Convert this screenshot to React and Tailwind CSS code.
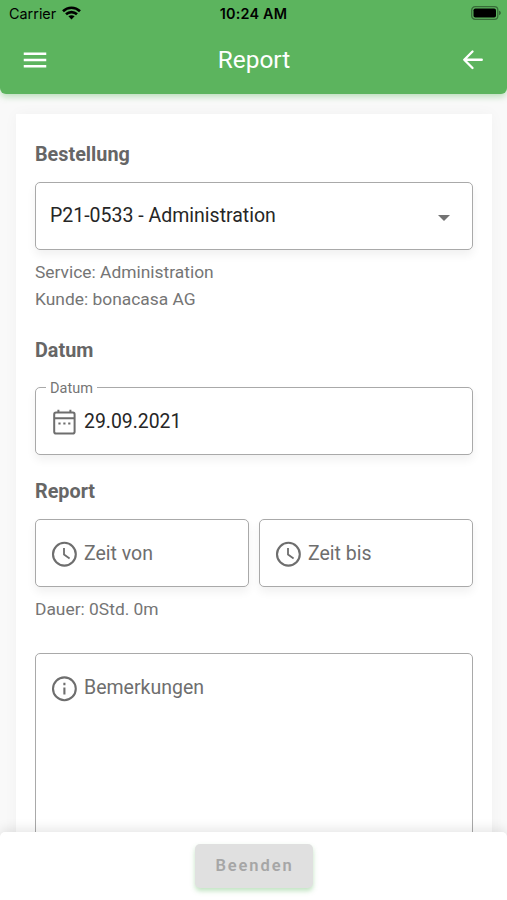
import React from 'react'

const MenuIcon = () => (
  <svg width="30" height="30" viewBox="0 0 24 24" fill="currentColor">
    <path d="M3 18h18v-2H3v2zm0-5h18v-2H3v2zm0-7v2h18V6H3z" />
  </svg>
)

const BackIcon = () => (
  <svg width="30" height="30" viewBox="0 0 24 24" fill="none" stroke="currentColor" strokeWidth="1.9" strokeLinecap="round" strokeLinejoin="round">
    <path d="M19 11.8H5.4M11.6 5.2L5 11.8l6.6 6.6" />
  </svg>
)

const WifiIcon = () => (
  <svg width="19" height="14" viewBox="0 0 19 14" fill="none" stroke="black" strokeWidth="2.6">
    <path d="M1 5.2C5.8 .6 13.2 .6 18 5.2" />
    <path d="M4 8.3C7.1 5.4 11.9 5.4 15 8.3" />
    <path d="M9.5 13.4L6.4 10.3C8.1 8.8 10.9 8.8 12.6 10.3Z" fill="black" stroke="none" />
  </svg>
)

const BatteryIcon = () => (
  <svg width="31" height="14" viewBox="0 0 31 14">
    <rect x="0.7" y="0.7" width="26.1" height="12.6" rx="3.4" fill="none" stroke="black" strokeOpacity="0.4" strokeWidth="1.3" />
    <rect x="2.5" y="2.5" width="22.5" height="9" rx="1.8" fill="black" />
    <path d="M28 4.8c1.2.3 1.9 1.2 1.9 2.2s-.7 1.9-1.9 2.2z" fill="black" fillOpacity="0.4" />
  </svg>
)

const CalendarIcon = () => (
  <svg width="26" height="28" viewBox="0 0 26 28" fill="none" stroke="currentColor" strokeWidth="2">
    <rect x="3.2" y="4.6" width="20.4" height="21" rx="1.8" />
    <path d="M3 10.3h20.6M7.4 1.8v3M19.4 1.8v3" />
    <path d="M7.4 15.4h2.2M12.3 15.4h2.2M17.2 15.4h2.2" />
  </svg>
)

const ClockIcon = () => (
  <svg width="26" height="26" viewBox="0 0 26 26" fill="none" stroke="currentColor" strokeWidth="2.1">
    <circle cx="13.4" cy="13.2" r="11.4" />
    <path d="M13 7v6.6l5.6 3.8" strokeWidth="1.8" />
  </svg>
)

const InfoIcon = () => (
  <svg width="26" height="26" viewBox="0 0 26 26" fill="none" stroke="currentColor" strokeWidth="2.1">
    <circle cx="13.4" cy="12.8" r="11.4" />
    <path d="M13.4 11.4v7.2M13.4 6.8v2.4" />
  </svg>
)

const fieldClass = 'h-[68px] rounded-[5px] border border-[#a9a9a9] bg-white shadow-[0_5px_10px_rgba(0,0,0,0.06)] flex items-center'

const TimeField = ({ label }) => (
  <div className={`${fieldClass} flex-1 pt-0.5 pl-[15px] gap-[7px] text-[#6e6e6e]`}>
    <ClockIcon />
    <span className="text-[19.5px]">{label}</span>
  </div>
)

const SectionTitle = ({ children }) => (
  <h2 className="text-[19.8px] leading-[26px] font-bold text-[#666]">{children}</h2>
)

const Header = () => (
  <header className="h-[94px] shrink-0 rounded-b-[6px] bg-[#5cb45e] shadow-[0_3px_6px_rgba(76,175,80,0.35)] relative">
    <div className="h-[27px] grid grid-cols-3 items-center px-[7px] font-['Inter',sans-serif] text-black">
      <div className="flex items-center gap-1.5 pl-0.5 text-[14.4px]">
        <span>Carrier</span>
        <WifiIcon />
      </div>
      <span className="text-center text-[14.4px] font-semibold tracking-[0.2px]">10:24 AM</span>
      <div className="flex justify-end -mr-0.5 -mt-px"><BatteryIcon /></div>
    </div>
    <div className="h-[66px] grid grid-cols-3 items-center pl-5 pr-[19px] text-white">
      <button className="w-[30px]"><MenuIcon /></button>
      <h1 className="text-center text-[24.4px] pt-px">Report</h1>
      <button className="w-[30px] justify-self-end"><BackIcon /></button>
    </div>
  </header>
)

const App = () => {
  return (
    <div className="h-[900px] w-[507px] overflow-hidden flex flex-col bg-[#f9f9f9] font-['Roboto',sans-serif]">
      <Header />

      <main className="flex-1 min-h-0 overflow-hidden px-[16px] pt-5">
        <div className="h-[900px] w-[476px] bg-white px-[19px] pt-7 shadow-[0_0_14px_rgba(0,0,0,0.035)]">
          <SectionTitle>Bestellung</SectionTitle>
          <div className={`${fieldClass} mt-[14px] justify-between pl-[14px] pr-[22px]`}>
            <span className="text-[19.5px] text-[#262626]">P21-0533 - Administration</span>
            <svg width="12" height="6" viewBox="0 0 12 6" className="mt-[3px]" fill="#737373">
              <path d="M0 0h12L6 6z" />
            </svg>
          </div>
          <div className="mt-[9px] text-[17.4px] leading-[27px] text-[#757575]">
            <p>Service: Administration</p>
            <p>Kunde: bonacasa AG</p>
          </div>

          <div className="mt-[25px]"><SectionTitle>Datum</SectionTitle></div>
          <div className={`${fieldClass} relative mt-[23px] pt-0.5 pl-[15px] gap-[7px] text-[#6e6e6e]`}>
            <span className="absolute left-[10px] -top-[8px] bg-white pl-1 pr-1 text-[14.5px] leading-[18px] text-[#757575]">Datum</span>
            <CalendarIcon />
            <span className="text-[19.4px] text-[#262626]">29.09.2021</span>
          </div>

          <div className="mt-[24px]"><SectionTitle>Report</SectionTitle></div>
          <div className="mt-[14px] flex gap-[10px]">
            <TimeField label="Zeit von" />
            <TimeField label="Zeit bis" />
          </div>
          <p className="mt-[9px] text-[17.4px] leading-[27px] text-[#757575]">Dauer: 0Std. 0m</p>

          <div className="mt-[30px] h-[240px] rounded-[5px] border border-[#a9a9a9] bg-white pt-[22px] pl-[15px] flex items-start gap-[7px] text-[#6e6e6e]">
            <InfoIcon />
            <span className="text-[19.5px] leading-[24px]">Bemerkungen</span>
          </div>
        </div>
      </main>

      <footer className="h-[68px] shrink-0 relative rounded-t-[5px] bg-white shadow-[0_-3px_12px_rgba(0,0,0,0.1)] flex justify-center pt-3">
        <button className="h-[44px] w-[118px] rounded-[5px] bg-[#e0e0e0] pl-0.5 pt-px text-[16.5px] font-semibold tracking-[1.9px] text-[#a6a6a6] shadow-[0_3px_5px_rgba(76,175,80,0.35)]">
          Beenden
        </button>
      </footer>
    </div>
  )
}

export default App
